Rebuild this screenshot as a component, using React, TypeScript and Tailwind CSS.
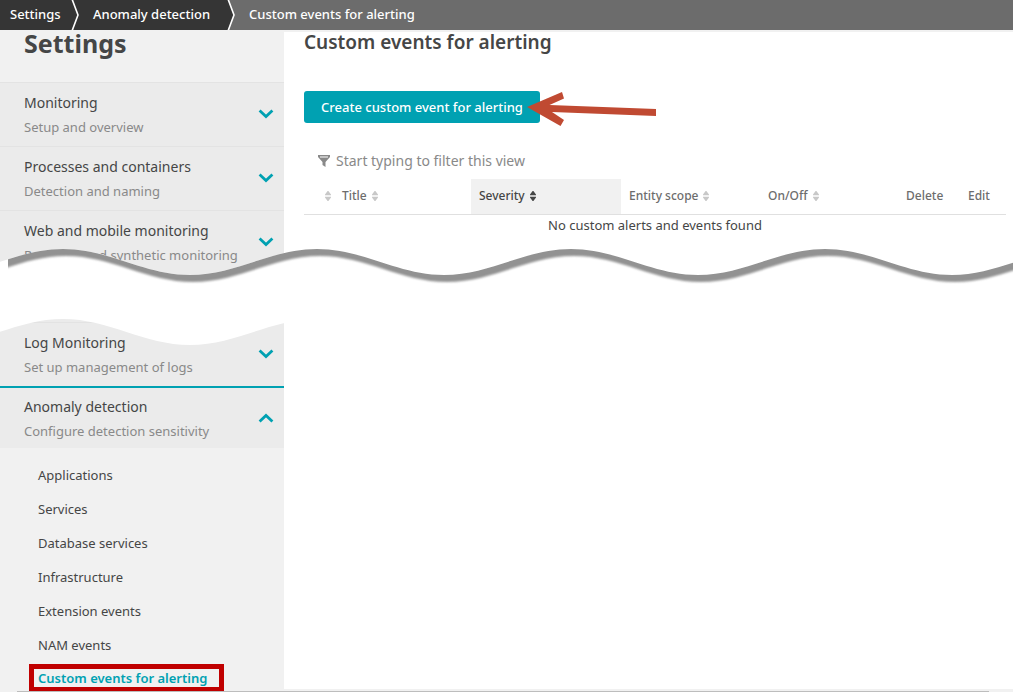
import React from "react";

const groupsAbove = [
  { title: "Monitoring", text: "Setup and overview" },
  { title: "Processes and containers", text: "Detection and naming" },
  { title: "Web and mobile monitoring", text: "Real user and synthetic monitoring" },
];

const subItems = [
  "Applications",
  "Services",
  "Database services",
  "Infrastructure",
  "Extension events",
  "NAM events",
];

function Chevron({ up = false }: { up?: boolean }) {
  return (
    <svg
      aria-hidden="true"
      width="16"
      height="10"
      viewBox="0 0 16 10"
      className={up ? "shrink-0 rotate-180" : "shrink-0"}
    >
      <path d="M1.600 1.600 8 7.600l6.400-6" fill="none" stroke="#00a1b2" strokeWidth="2.800" />
    </svg>
  );
}

function Group({ title, text, open = false }: { title: string; text: string; open?: boolean }) {
  return (
    <button
      type="button"
      aria-expanded={open}
      className={
        open
          ? "flex h-[62px] w-full items-center justify-between border-t-2 border-[#00a1b2] bg-[#ebebeb] pr-[10px] pl-6 text-left"
          : "flex h-16 w-full items-center justify-between border-t border-[#e3e3e3] bg-[#ebebeb] pr-[10px] pb-0.5 pl-6 text-left"
      }
    >
      <span className="flex flex-col gap-1 pt-0.5">
        <span className="text-[14px] leading-5 text-[#454646]">{title}</span>
        <span className="text-[13px] leading-5 whitespace-nowrap text-[#898989]">{text}</span>
      </span>
      <Chevron up={open} />
    </button>
  );
}

function SortIcon({ active = false }: { active?: boolean }) {
  return (
    <svg
      aria-hidden="true"
      width="6"
      height="10"
      viewBox="0 0 6 10"
      className="shrink-0"
      fill={active ? "#454646" : "#c8c8c8"}
    >
      <path d="M2.600 0h.8L6 3.400V4.200H0V3.400zM0 5.800h6v.8L3.400 10H2.600L0 6.600z" />
    </svg>
  );
}

function Separator() {
  return (
    <svg aria-hidden="true" width="10" height="30" viewBox="0 0 10 30" className="shrink-0">
      <path d="M1 -1 7 15 1 31" fill="none" stroke="#fff" strokeWidth="1.600" />
    </svg>
  );
}

const HALF = 127;

/* Wavy line through `count` full periods, beginning at a crest. */
function wave(crestX: number, crestY: number, count: number) {
  let d = "";
  for (let i = 0; i < count; i++) {
    const x = crestX + i * 2 * HALF;
    const low = crestY + 26;
    d += `C${x + 46} ${crestY} ${x + HALF - 46} ${low} ${x + HALF} ${low}`;
    d += `C${x + HALF + 46} ${low} ${x + 2 * HALF - 46} ${crestY} ${x + 2 * HALF} ${crestY}`;
  }
  return d;
}

function Tear() {
  return (
    <svg
      aria-hidden="true"
      className="pointer-events-none absolute top-[245px] left-0 h-[106px] w-full overflow-hidden"
    >
      <defs>
        <filter id="soft" x="-5%" y="-20%" width="110%" height="140%">
          <feGaussianBlur stdDeviation="1" />
        </filter>
        <clipPath id="below">
          <path d={`M-191 4${wave(-191, 4, 20)}V106H-191z`} />
        </clipPath>
        <mask id="above" maskUnits="userSpaceOnUse" x="0" y="0" width="5000" height="106">
          <rect width="5000" height="106" fill="#fff" />
          <path d={`M-191 74${wave(-191, 74, 20)}V106H-191z`} fill="#000" />
        </mask>
        <clipPath id="start">
          <rect x="8" y="0" width="5000" height="106" />
        </clipPath>
      </defs>
      <g clipPath="url(#below)">
        <rect width="100%" height="106" fill="#fff" mask="url(#above)" />
        <g clipPath="url(#start)">
          <path
            d={`M-188 11${wave(-188, 11, 20)}V-30H-188z`}
            fill="#929292"
            filter="url(#soft)"
          />
        </g>
      </g>
    </svg>
  );
}

function HeadCell({
  label,
  sort = true,
  active = false,
  className,
}: {
  label: string;
  sort?: boolean;
  active?: boolean;
  className: string;
}) {
  return (
    <th
      scope="col"
      aria-sort={active ? "ascending" : undefined}
      className={`h-9 border-b border-[#e0e0e0] p-0 pb-0.5 text-left text-xs font-medium ${className}`}
    >
      {sort ? (
        <button type="button" aria-label={label || "Sort"} className="flex items-center gap-[5px]">
          {label && <span>{label}</span>}
          <SortIcon active={active} />
        </button>
      ) : (
        label
      )}
    </th>
  );
}

export default function App() {
  return (
    <div className="relative flex min-h-screen flex-col bg-[#f1f1f1] font-['Noto_Sans',sans-serif] text-[#454646]">
      <nav aria-label="Breadcrumb" className="h-[30px] bg-[#6c6c6c] text-[13px] font-medium text-white">
        <ol className="flex h-full items-center">
          <li className="flex h-full items-center bg-[#353535] pl-[10px]">
            <a href="#settings" className="w-[61px]">Settings</a>
          </li>
          <li className="flex h-full items-center bg-[#353535]">
            <Separator />
            <a href="#anomaly" className="w-[146px] pl-3">Anomaly detection</a>
          </li>
          <li className="flex h-full items-center">
            <svg aria-hidden="true" width="10" height="30" viewBox="0 0 10 30" className="shrink-0">
              <path d="M0 0H1L7 15 1 30H0z" fill="#353535" />
              <path d="M1 -1 7 15 1 31" fill="none" stroke="#fff" strokeWidth="1.600" />
            </svg>
            <a href="#custom" aria-current="page" className="pl-3">Custom events for alerting</a>
          </li>
        </ol>
      </nav>

      <div className="flex grow">
        <aside className="w-[284px] shrink-0">
          <h1 className="h-[52px] pl-6 text-[25px] leading-[26px] font-bold">Settings</h1>
          {groupsAbove.map((g) => (
            <Group key={g.title} {...g} />
          ))}
          <div className="bg-[#ebebeb] pt-12">
            <Group title="Log Monitoring" text="Set up management of logs" />
            <Group title="Anomaly detection" text="Configure detection sensitivity" open />
          </div>
          <ul className="pt-[11px] pl-[38px] text-[13px]">
            {subItems.map((s) => (
              <li key={s} className="flex h-[34px] items-center">
                <a href="#item">{s}</a>
              </li>
            ))}
            <li className="-ml-[9px] flex pt-px">
              <a
                href="#custom"
                aria-current="page"
                className="flex h-7 w-[195px] items-center border-[5px] border-[#c00000] pt-0.5 pl-1 font-semibold whitespace-nowrap text-[#00a1b2]"
              >
                Custom events for alerting
              </a>
            </li>
          </ul>
        </aside>

        <main className="mt-0.5 mb-[3px] min-w-0 grow bg-white pr-[7px] pl-5">
          <h2 className="text-[19px] leading-5 font-semibold">Custom events for alerting</h2>
          <div className="relative mt-[39px] flex">
            <button
              type="button"
              className="h-8 w-[236px] rounded-[3px] bg-[#00a1b2] pt-px text-[13px] font-medium text-white"
            >
              Create custom event for alerting
            </button>
            <svg
              aria-hidden="true"
              width="130"
              height="35"
              viewBox="0 0 130 35"
              className="absolute top-px left-[223px]"
            >
              <path d="M0 15 35 0l2 6.500-14.500 6.500L129 17v7L25 20l12 8-3.500 6z" fill="#c04a32" />
            </svg>
          </div>
          <label className="mt-7 flex h-5 items-center gap-[6px] pl-[14px]">
            <svg aria-hidden="true" width="12" height="12" viewBox="0 0 12 12" className="shrink-0">
              <path d="M0 0h12v2L7.500 7v5l-3-2V7L0 2z" fill="#898989" />
              <path d="M2 2h8" stroke="#fff" strokeWidth="1" />
            </svg>
            <input
              type="text"
              aria-label="Filter this view"
              placeholder="Start typing to filter this view"
              className="w-72 bg-transparent p-0 text-[14px] leading-5 outline-none placeholder:text-[#898989]"
            />
          </label>
          <table className="mt-2 w-full table-fixed border-separate border-spacing-0 text-[#6d6d6d]">
            <thead>
              <tr>
                <HeadCell label="" className="w-[30px] pl-[21px]" />
                <HeadCell label="Title" className="w-[137px] pl-2" />
                <HeadCell label="Severity" active className="w-[150px] bg-[#f1f1f1] pl-2 text-[#454646]" />
                <HeadCell label="Entity scope" className="w-[139px] pl-2" />
                <HeadCell label="On/Off" className="pl-2" />
                <HeadCell label="Delete" sort={false} className="w-[62px] pl-[9px]" />
                <HeadCell label="Edit" sort={false} className="w-[47px] pl-[9px]" />
              </tr>
            </thead>
            <tbody>
              <tr>
                <td colSpan={7} className="p-0 text-center text-[13px] leading-5 text-[#454646]">
                  No custom alerts and events found
                </td>
              </tr>
            </tbody>
          </table>
        </main>
      </div>
      <Tear />
      <div className="absolute right-6 bottom-0 left-[17px] h-px bg-[#bdbdbd]" />
    </div>
  );
}
